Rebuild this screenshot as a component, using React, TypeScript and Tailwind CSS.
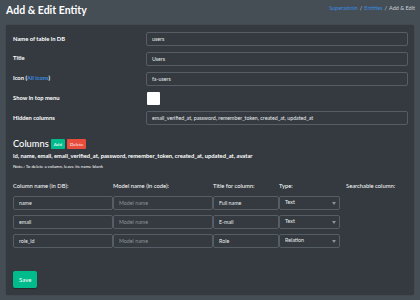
import { ReactElement } from 'react';

type Row = { db: string; title: string; type: string };

const rows: Row[] = [
  { db: 'name', title: 'Full name', type: 'Text' },
  { db: 'email', title: 'E-mail', type: 'Text' },
  { db: 'role_id', title: 'Role', type: 'Relation' },
];

function TextInput({ value, placeholder, className = '' }: { value?: string; placeholder?: string; className?: string }) {
  return (
    <input
      readOnly
      defaultValue={value}
      placeholder={placeholder}
      className={`h-[14px] w-full rounded-[2px] border border-[#565d65] bg-[#343a40] px-[5px] text-[5.3px] text-[#e9ecef] outline-none placeholder:text-[#8b929a] ${className}`}
    />
  );
}

function Select({ value }: { value: string }) {
  return (
    <div className="flex h-[14px] w-[61px] items-center justify-between rounded-[2px] border border-[#565d65] bg-[#343a40] pl-[5px] pr-[3px] text-[5.3px] text-[#e9ecef]">
      <span>{value}</span>
      <svg width="4" height="3" viewBox="0 0 4 3" className="fill-[#8b929a]">
        <path d="M0 0h4L2 3z" />
      </svg>
    </div>
  );
}

export default function App(): ReactElement {
  return (
    <div className="min-h-[300px] bg-[#454d55] font-['Lato',sans-serif] text-white">
      <div className="flex h-[25px] items-start justify-between px-[6px] pt-[3px]">
        <h1 className="text-[10.5px] font-bold leading-[14px]">Add &amp; Edit Entity</h1>
        <div className="mr-[-1px] mt-[2px] text-[5.5px] leading-[7px] text-[#ced4da]">
          <span className="text-[#3b8be0]">Superadmin</span>
          <span className="mx-[2px]">/</span>
          <span className="text-[#3b8be0]">Entities</span>
          <span className="mx-[2px]">/</span>
          <span>Add &amp; Edit</span>
        </div>
      </div>

      <div className="mx-[6px] h-[270px] rounded-[2px] bg-[#343a40] pb-[7px] pl-[7px] pr-[6px] pt-[7px] shadow-[0_0_1px_rgba(0,0,0,0.4)]">
        <div className="grid grid-cols-[133px_1fr] items-center gap-y-[5.75px] text-[5.8px]">
          <label className="font-bold">Name of table in DB</label>
          <TextInput value="users" />
          <label className="font-bold">Title</label>
          <TextInput value="Users" />
          <label className="font-bold">
            Icon (<span className="text-[#3b8be0]">All icons</span>)
          </label>
          <TextInput value="fa-users" />
          <label className="font-bold">Show in top menu</label>
          <div className="flex h-[14px] items-center pl-[1px]">
            <div className="h-[13px] w-[13px] rounded-[1px] bg-white" />
          </div>
          <label className="font-bold">Hidden columns</label>
          <TextInput value="email_verified_at, password, remember_token, created_at, updated_at" />
        </div>

        <div className="mt-[14px] flex h-[10px] items-center">
          <h2 className="text-[9.3px] font-medium leading-[10px]">Columns</h2>
          <button className="ml-[2px] h-[10px] rounded-[1px] bg-[#00bc8c] px-[3px] text-[4.6px] leading-[10px]">Add</button>
          <button className="ml-[2px] h-[10px] rounded-[1px] bg-[#e74c3c] px-[3px] text-[4.6px] leading-[10px]">Delete</button>
        </div>
        <p className="mt-[3px] text-[5.8px] font-bold leading-[7px]">
          id, name, email, email_verified_at, password, remember_token, created_at, updated_at, avatar
        </p>
        <p className="mt-[5px] text-[4.4px] leading-[6px]">Note.: To delete a column, leave its name blank</p>

        <div className="mt-[12px] grid grid-cols-[100px_100px_66px_67px_1fr] gap-y-[5px] text-[5.8px]">
          <div className="h-[7px] leading-[7px]">Column name (in DB):</div>
          <div className="h-[7px] leading-[7px]">Model name (in code):</div>
          <div className="h-[7px] leading-[7px]">Title for column:</div>
          <div className="h-[7px] leading-[7px]">Type:</div>
          <div className="h-[7px] leading-[7px]">Searchable column:</div>
          {rows.map((row, i) => (
            <div key={`row_${i}`} className="contents">
              <div className={i === 0 ? 'mt-[2px]' : ''}>
                <TextInput value={row.db} className="w-[95px]" />
              </div>
              <div className={i === 0 ? 'mt-[2px]' : ''}>
                <TextInput placeholder="Model name" className="w-[93px]" />
              </div>
              <div className={i === 0 ? 'mt-[2px]' : ''}>
                <TextInput value={row.title} className="w-[61px]" />
              </div>
              <div className={i === 0 ? 'mt-[2px]' : ''}>
                <Select value={row.type} />
              </div>
              <div />
            </div>
          ))}
        </div>

        <button className="mt-[23px] h-[17px] rounded-[2px] bg-[#00bc8c] px-[6px] text-[6px] leading-[17px] shadow-[0_1px_1px_rgba(0,0,0,0.3)]">
          Save
        </button>
      </div>
    </div>
  );
}
